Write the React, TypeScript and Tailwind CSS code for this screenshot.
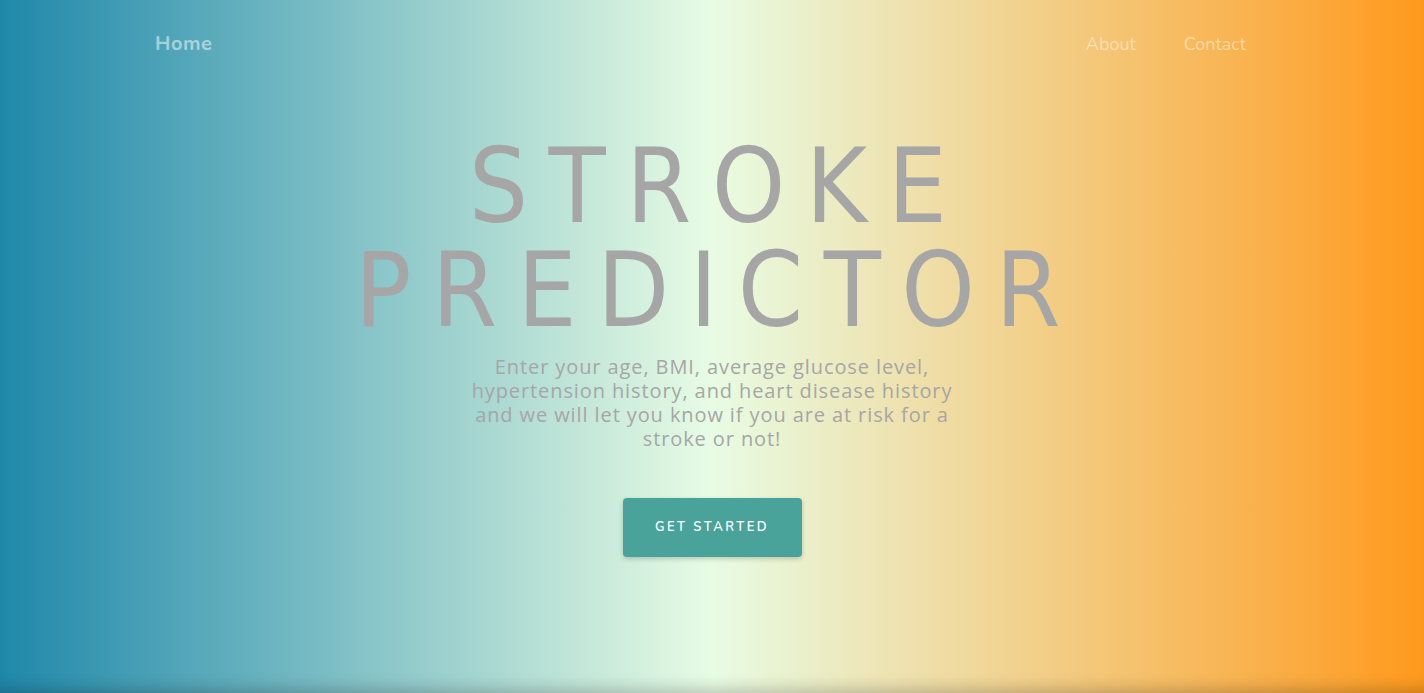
import React from "react";

const App = () => {
  return (
    <section className="relative h-[693px] w-full overflow-hidden bg-[linear-gradient(to_right,#1f88aa_0%,#e8fce4_50%,#ff9a1d_100%)] shadow-[inset_0_-16px_16px_-12px_rgba(0,0,0,0.22)] font-['Nunito','Lato',sans-serif]">
      <nav className="flex items-center justify-between pl-[155px] pr-[178px] pt-[29px]">
        <a className="text-[20px] font-bold tracking-[0.5px] text-white/50">Home</a>
        <div className="flex items-center gap-[48px] text-[18px] text-white/45">
          <a>About</a>
          <a>Contact</a>
        </div>
      </nav>

      <div className="mt-[75px] flex flex-col items-center text-center">
        <h1 className="pl-[12px] font-['DejaVu_Sans_Condensed','DejaVu_Sans',sans-serif] text-[104px] leading-[104px] tracking-[20.5px] text-[#a6a6a6]">
          STROKE
          <br />
          PREDICTOR
        </h1>
        <p className="mt-[13px] w-[490px] font-['Open_Sans',sans-serif] text-[20px] leading-[24px] tracking-[0.9px] text-[#a6a6a6]">
          Enter your age, BMI, average glucose level, hypertension history, and heart disease history and we will let you know if you are at risk for a stroke or not!
        </p>
        <button className="mt-[47px] h-[59px] w-[179px] rounded-[4px] bg-[#4aa39b] text-[13px] font-semibold tracking-[2.5px] text-white shadow-[0_2px_5px_rgba(0,0,0,0.2)]">
          GET STARTED
        </button>
      </div>
    </section>
  );
};

export default App;
